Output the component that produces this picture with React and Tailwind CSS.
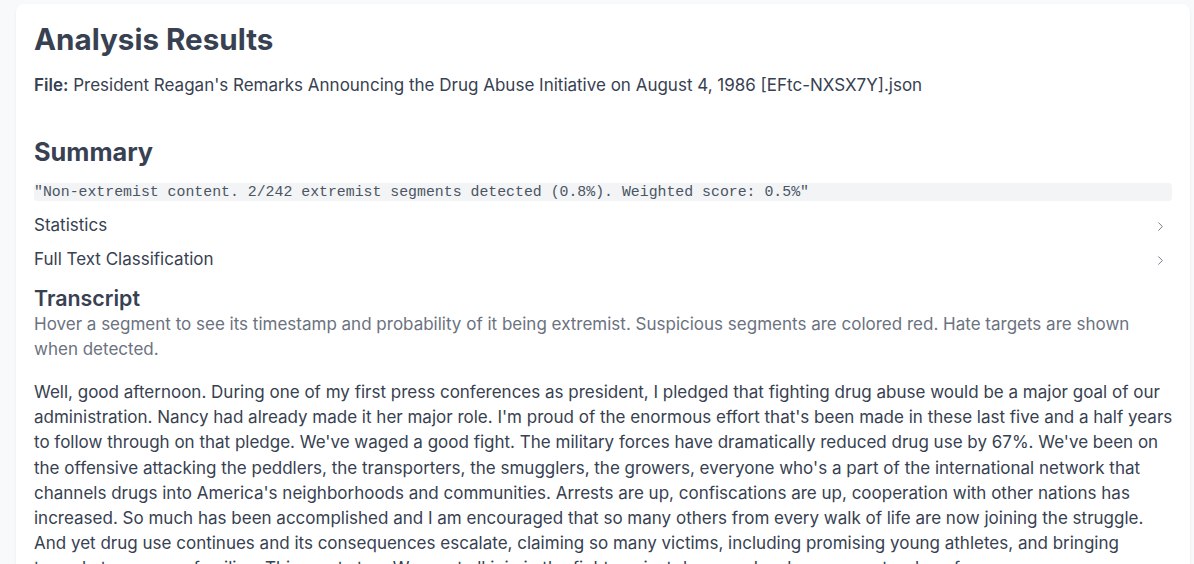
import { ChevronRight } from 'lucide-react'

const transcript =
  "Well, good afternoon. During one of my first press conferences as president, I pledged that fighting drug abuse would be a major goal of our administration. Nancy had already made it her major role. I'm proud of the enormous effort that's been made in these last five and a half years to follow through on that pledge. We've waged a good fight. The military forces have dramatically reduced drug use by 67%. We've been on the offensive attacking the peddlers, the transporters, the smugglers, the growers, everyone who's a part of the international network that channels drugs into America's neighborhoods and communities. Arrests are up, confiscations are up, cooperation with other nations has increased. So much has been accomplished and I am encouraged that so many others from every walk of life are now joining the struggle. And yet drug use continues and its consequences escalate, claiming so many victims, including promising young athletes, and bringing tragedy to so many families. This must stop. We must all join in the fight against drugs and make our country drug-free."

const Collapsible = ({ label }) => (
  <div className="flex items-center justify-between h-[34px]">
    <span>{label}</span>
    <ChevronRight className="mr-[4px] h-[15px] w-[15px] text-gray-500" strokeWidth={1.5} />
  </div>
)

const App = () => {
  return (
    <div className="min-h-screen bg-[#f8f9fb] pl-4 pr-1 pt-1 font-['Inter',sans-serif] text-[#374151]">
      <div className="rounded-lg bg-white px-[18px] pt-[17px] shadow-[0_1px_3px_rgba(0,0,0,0.06)]">
        <h1 className="text-[29.6px] font-bold leading-9 text-[#374151]">Analysis Results</h1>
        <p className="mt-[16px] text-[17px] leading-6">
          <span className="font-semibold">File:</span> President Reagan's Remarks Announcing the Drug Abuse Initiative on August 4, 1986 [EFtc-NXSX7Y].json
        </p>

        <h2 className="mt-[39px] text-[25.3px] font-bold leading-8">Summary</h2>
        <div className="mt-[15px] rounded bg-[#f3f4f6] font-['Liberation_Mono',monospace] text-[14.85px] leading-[18px] text-[#4b5563]">
          "Non-extremist content. 2/242 extremist segments detected (0.8%). Weighted score: 0.5%"
        </div>

        <div className="mt-[8px] text-[17px]">
          <Collapsible label="Statistics" />
          <Collapsible label="Full Text Classification" />
        </div>

        <h3 className="mt-[7px] text-[21.4px] font-semibold leading-7">Transcript</h3>
        <p className="text-[17px] leading-[25px] text-[#6b7280]">
          Hover a segment to see its timestamp and probability of it being extremist. Suspicious segments are colored red. Hate targets are shown when detected.
        </p>
        <p className="-mr-[5px] mt-[18px] text-[17px] leading-[25.2px]">{transcript}</p>
      </div>
    </div>
  )
}

export default App
